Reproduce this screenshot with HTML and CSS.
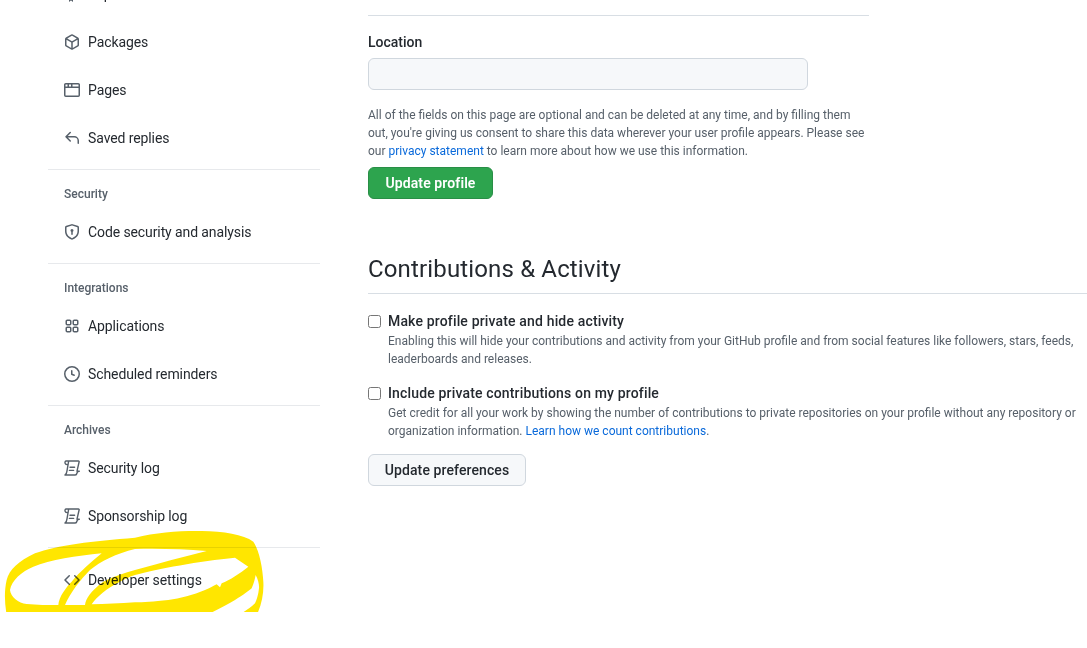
FILE: index.html
```html
<!DOCTYPE html>
<html lang="en">
<head>
    <meta charset="UTF-8">
    <meta name="viewport" content="width=device-width, initial-scale=1.0">
    <title>Your profile</title>
    <link rel="stylesheet" href="styles.css">
</head>
<body>
    <div class="page">
        <nav class="sidebar">
            <a class="menu-item"><svg class="icon" viewBox="0 0 16 16"><path d="M2 2.5A2.5 2.5 0 0 1 4.5 0h8.75a.75.75 0 0 1 .75.75v12.5a.75.75 0 0 1-.75.75h-2.5a.75.75 0 0 1 0-1.5h1.75v-2h-8a1 1 0 0 0-.714 1.7.75.75 0 1 1-1.072 1.05A2.495 2.495 0 0 1 2 11.5Zm10.5-1h-8a1 1 0 0 0-1 1v6.708A2.486 2.486 0 0 1 4.5 9h8ZM5 12.25a.25.25 0 0 1 .25-.25h3.5a.25.25 0 0 1 .25.25v3.25a.25.25 0 0 1-.4.2l-1.45-1.087a.249.249 0 0 0-.3 0L5.4 15.7a.25.25 0 0 1-.4-.2Z"/></svg>Repositories</a>
            <a class="menu-item"><svg class="icon" viewBox="0 0 16 16"><path d="m8.878.392 5.25 3.045c.54.314.872.89.872 1.514v6.098a1.75 1.75 0 0 1-.872 1.514l-5.25 3.045a1.75 1.75 0 0 1-1.756 0l-5.25-3.045A1.75 1.75 0 0 1 1 11.049V4.951c0-.624.332-1.201.872-1.514L7.122.392a1.75 1.75 0 0 1 1.756 0ZM7.875 1.69l-4.63 2.685L8 7.133l4.755-2.758-4.63-2.685a.248.248 0 0 0-.25 0ZM2.5 5.677v5.372c0 .09.047.171.125.216l4.625 2.683V8.432Zm6.25 8.271 4.625-2.683a.25.25 0 0 0 .125-.216V5.677L8.75 8.432Z"/></svg>Packages</a>
            <a class="menu-item"><svg class="icon" viewBox="0 0 16 16"><path d="M0 2.75C0 1.784.784 1 1.75 1h12.5c.966 0 1.75.784 1.75 1.75v10.5A1.75 1.75 0 0 1 14.25 15H1.75A1.75 1.75 0 0 1 0 13.25ZM14.5 6h-13v7.25c0 .138.112.25.25.25h12.5a.25.25 0 0 0 .25-.25Zm-6-3.5v2h6v-1.75a.25.25 0 0 0-.25-.25ZM5 2.5v2h2v-2Zm-3.25 0a.25.25 0 0 0-.25.25V4.5h2v-2Z"/></svg>Pages</a>
            <a class="menu-item"><svg class="icon" viewBox="0 0 16 16"><path d="M6.78 1.97a.75.75 0 0 1 0 1.06L3.81 6h6.44A4.75 4.75 0 0 1 15 10.75v2.5a.75.75 0 0 1-1.5 0v-2.5a3.25 3.25 0 0 0-3.25-3.25H3.81l2.97 2.97a.749.749 0 0 1-.326 1.275.749.749 0 0 1-.734-.215L1.47 7.28a.75.75 0 0 1 0-1.06l4.25-4.25a.75.75 0 0 1 1.06 0Z"/></svg>Saved replies</a>

            <h3 class="menu-heading">Security</h3>
            <a class="menu-item"><svg class="icon" viewBox="0 0 16 16"><path d="m8.533.133 5.25 1.68A1.75 1.75 0 0 1 15 3.48V7c0 1.566-.32 3.182-1.303 4.682-.983 1.498-2.585 2.813-5.032 3.855a1.697 1.697 0 0 1-1.33 0c-2.447-1.042-4.049-2.357-5.032-3.855C1.32 10.182 1 8.566 1 7V3.48a1.75 1.75 0 0 1 1.217-1.667l5.25-1.68a1.748 1.748 0 0 1 1.066 0Zm-.61 1.429.001.001-5.25 1.68a.251.251 0 0 0-.174.237V7c0 1.36.275 2.666 1.057 3.859.784 1.194 2.121 2.342 4.366 3.298a.196.196 0 0 0 .154 0c2.245-.957 3.582-2.103 4.366-3.297C13.225 9.666 13.5 8.358 13.5 7V3.48a.25.25 0 0 0-.174-.238l-5.25-1.68a.25.25 0 0 0-.153 0ZM9.5 6.5c0 .536-.286 1.032-.75 1.3v2.45a.75.75 0 0 1-1.5 0V7.8A1.5 1.5 0 1 1 9.5 6.5Z"/></svg>Code security and analysis</a>

            <h3 class="menu-heading">Integrations</h3>
            <a class="menu-item"><svg class="icon" viewBox="0 0 16 16"><path d="M1.5 3.25c0-.966.784-1.75 1.75-1.75h2.5c.966 0 1.75.784 1.75 1.75v2.5A1.75 1.75 0 0 1 5.75 7.5h-2.5A1.75 1.75 0 0 1 1.5 5.75Zm7 0c0-.966.784-1.75 1.75-1.75h2.5c.966 0 1.75.784 1.75 1.75v2.5a1.75 1.75 0 0 1-1.75 1.75h-2.5A1.75 1.75 0 0 1 8.5 5.75Zm-7 7c0-.966.784-1.75 1.75-1.75h2.5c.966 0 1.75.784 1.75 1.75v2.5a1.75 1.75 0 0 1-1.75 1.75h-2.5a1.75 1.75 0 0 1-1.75-1.75Zm7 0c0-.966.784-1.75 1.75-1.75h2.5c.966 0 1.75.784 1.75 1.75v2.5a1.75 1.75 0 0 1-1.75 1.75h-2.5a1.75 1.75 0 0 1-1.75-1.75ZM3.25 3a.25.25 0 0 0-.25.25v2.5c0 .138.112.25.25.25h2.5A.25.25 0 0 0 6 5.75v-2.5A.25.25 0 0 0 5.75 3Zm7 0a.25.25 0 0 0-.25.25v2.5c0 .138.112.25.25.25h2.5a.25.25 0 0 0 .25-.25v-2.5a.25.25 0 0 0-.25-.25Zm-7 7a.25.25 0 0 0-.25.25v2.5c0 .138.112.25.25.25h2.5a.25.25 0 0 0 .25-.25v-2.5a.25.25 0 0 0-.25-.25Zm7 0a.25.25 0 0 0-.25.25v2.5c0 .138.112.25.25.25h2.5a.25.25 0 0 0 .25-.25v-2.5a.25.25 0 0 0-.25-.25Z"/></svg>Applications</a>
            <a class="menu-item"><svg class="icon" viewBox="0 0 16 16"><path d="M8 0a8 8 0 1 1 0 16A8 8 0 0 1 8 0ZM1.5 8a6.5 6.5 0 1 0 13 0 6.5 6.5 0 0 0-13 0Zm7-3.25v2.992l2.028.812a.75.75 0 0 1-.557 1.392l-2.5-1A.751.751 0 0 1 7 8.25v-3.5a.75.75 0 0 1 1.5 0Z"/></svg>Scheduled reminders</a>

            <h3 class="menu-heading">Archives</h3>
            <a class="menu-item"><svg class="icon icon-log" viewBox="0 0 16 16"><path d="M2 1H14.4C15 1 15.3 1.5 15.1 2L13 11.2M2 1C1 1.2.8 2.4 1.2 3.4 1.5 4.2 2.2 4.6 3.5 4.6M4.6 1.4 3 10.8C2.8 12.5 2 14.4.9 15H11.2C12.4 15 12.8 14 13 13 13.2 12 14 11.2 15.3 11.2H13M6 7.2H10.6M5.4 10.4H9.6"/></svg>Security log</a>
            <a class="menu-item"><svg class="icon icon-log" viewBox="0 0 16 16"><path d="M2 1H14.4C15 1 15.3 1.5 15.1 2L13 11.2M2 1C1 1.2.8 2.4 1.2 3.4 1.5 4.2 2.2 4.6 3.5 4.6M4.6 1.4 3 10.8C2.8 12.5 2 14.4.9 15H11.2C12.4 15 12.8 14 13 13 13.2 12 14 11.2 15.3 11.2H13M6 7.2H10.6M5.4 10.4H9.6"/></svg>Sponsorship log</a>

            <div class="menu-divider"></div>
            <a class="menu-item"><svg class="icon" viewBox="0 0 16 16"><path d="m11.28 3.22 4.25 4.25a.75.75 0 0 1 0 1.06l-4.25 4.25a.749.749 0 0 1-1.275-.326.749.749 0 0 1 .215-.734L13.94 8l-3.72-3.72a.749.749 0 0 1 .326-1.275.749.749 0 0 1 .734.215Zm-6.56 0a.751.751 0 0 1 1.042.018.751.751 0 0 1 .018 1.042L2.06 8l3.72 3.72a.749.749 0 0 1-.326 1.275.749.749 0 0 1-.734-.215L.47 8.53a.75.75 0 0 1 0-1.06Z"/></svg>Developer settings</a>
        </nav>

        <main class="content">
            <div class="rule"></div>
            <label class="field-label">Location</label>
            <input class="field-input" type="text">
            <p class="note">All of the fields on this page are optional and can be deleted at any time, and by filling them out, you're giving us consent to share this data wherever your user profile appears. Please see our <a class="link">privacy statement</a> to learn more about how we use this information.</p>
            <button class="btn btn-green">Update profile</button>

            <h2 class="section-title">Contributions &amp; Activity</h2>

            <div class="check-row">
                <input type="checkbox">
                <div>
                    <div class="check-title">Make profile private and hide activity</div>
                    <p class="check-note">Enabling this will hide your contributions and activity from your GitHub profile and from social features like followers, stars, feeds, leaderboards and releases.</p>
                </div>
            </div>
            <div class="check-row">
                <input type="checkbox">
                <div>
                    <div class="check-title">Include private contributions on my profile</div>
                    <p class="check-note">Get credit for all your work by showing the number of contributions to private repositories on your profile without any repository or organization information. <a class="link">Learn how we count contributions</a>.</p>
                </div>
            </div>
            <button class="btn btn-plain">Update preferences</button>
        </main>

        <!-- marker scribble drawn over the screenshot -->
        <svg class="scribble" viewBox="0 0 810 261">
            <path fill-rule="evenodd" d="M20 270C14 235 12 200 20 165 28 135 55 108 105 85 170 60 280 48 405 38 470 22 540 17 605 18 670 19 730 28 760 50 778 75 788 130 790 170 792 205 785 240 770 270Z
            M305 85C230 92 150 105 100 125 65 140 35 165 30 195 32 215 55 235 80 237 110 240 145 240 175 240 176 215 200 185 215 170 240 140 275 110 305 85Z
            M195 240L255 240C258 220 270 200 310 170 340 155 375 143 405 135 480 115 550 95 620 78 550 72 470 70 405 72 350 85 300 110 270 135 240 165 210 205 195 240Z
            M275 238C290 215 320 190 360 170 375 162 390 155 405 150 470 132 600 108 705 98L745 125C720 145 690 165 665 175L660 187 650 178C640 182 630 190 615 195 580 210 540 220 505 225 460 230 430 232 405 232 360 235 315 237 275 238Z
            M620 270C650 255 680 240 705 225 730 210 750 195 755 190 762 175 765 160 767 150 775 165 778 180 777 190 775 210 770 225 765 235 750 250 730 262 715 270Z"/>
        </svg>
    </div>
</body>
</html>
```

FILE: styles.css
```css
*{
    box-sizing: border-box;
}
body{
    margin: 0;
    background-color: #ffffff;
    font-family: "Roboto", "Liberation Sans", sans-serif;
    font-size: 14px;
    color: #24292f;
}
.page{
    position: relative;
    display: flex;
    width: 1087px;
    height: 648px;
    overflow: hidden;
    padding-left: 48px;
}
.sidebar{
    width: 272px;
    flex-shrink: 0;
    margin-top: -30px;
}
.menu-item{
    display: flex;
    align-items: center;
    height: 48px;
    padding-left: 16px;
    line-height: 20px;
    letter-spacing: -0.1px;
}
.icon{
    width: 16px;
    height: 16px;
    margin-right: 8px;
    flex-shrink: 0;
    fill: #57606a;
}
.icon-log{
    fill: none;
    stroke: #57606a;
    stroke-width: 1.4;
    stroke-linecap: round;
    stroke-linejoin: round;
}
.menu-heading{
    margin: 7px 0 0;
    padding: 15px 16px 0;
    height: 39px;
    border-top: 1px solid #e7e9ec;
    font-size: 12px;
    line-height: 18px;
    font-weight: 500;
    color: #57606a;
}
.menu-divider{
    margin-top: 7px;
    height: 9px;
    border-top: 1px solid #e7e9ec;
}
.content{
    margin-left: 48px;
    flex: 1;
    min-width: 0;
    padding-top: 15px;
}
.rule{
    width: 501px;
    border-top: 1px solid #d8dee4;
}
.field-label{
    display: block;
    margin-top: 16px;
    font-weight: 500;
    line-height: 20px;
}
.field-input{
    display: block;
    width: 440px;
    height: 32px;
    margin-top: 6px;
    background-color: #f6f8fa;
    border: 1px solid #d0d7de;
    border-radius: 6px;
}
.note{
    width: 501px;
    margin: 16px 0 7px;
    font-size: 12px;
    line-height: 18px;
    color: #57606a;
}
.link{
    color: #0969da;
}
.btn{
    display: block;
    height: 32px;
    padding: 0;
    border-radius: 6px;
    font-family: inherit;
    font-size: 14px;
    letter-spacing: 0.1px;
    white-space: nowrap;
}
.btn-green{
    width: 125px;
    background-color: #2da44e;
    border: 1px solid #298e46;
    color: #ffffff;
    font-weight: 600;
}
.btn-plain{
    width: 158px;
    background-color: #f6f8fa;
    border: 1px solid #d0d7de;
    color: #24292f;
    font-weight: 500;
}
.section-title{
    margin: 52px 0 0;
    padding-bottom: 6px;
    border-bottom: 1px solid #d8dee4;
    font-size: 24px;
    line-height: 36px;
    font-weight: 400;
    letter-spacing: 0.15px;
    color: #24292f;
}
.check-row{
    display: flex;
    margin-top: 17px;
}
.check-row + .check-row{
    margin-top: 15px;
}
.check-row input{
    width: 13px;
    height: 13px;
    margin: 4px 7px 0 0;
    flex-shrink: 0;
}
.check-title{
    font-weight: 500;
    line-height: 21px;
    letter-spacing: 0.16px;
}
.check-note{
    margin: 0;
    font-size: 12px;
    line-height: 18px;
    color: #57606a;
}
.check-row + .btn{
    margin-top: 14px;
}
.scribble{
    position: absolute;
    left: 0;
    top: 525px;
    width: 270px;
    height: 87px;
    fill: #ffe600;
    mix-blend-mode: multiply;
}
```
